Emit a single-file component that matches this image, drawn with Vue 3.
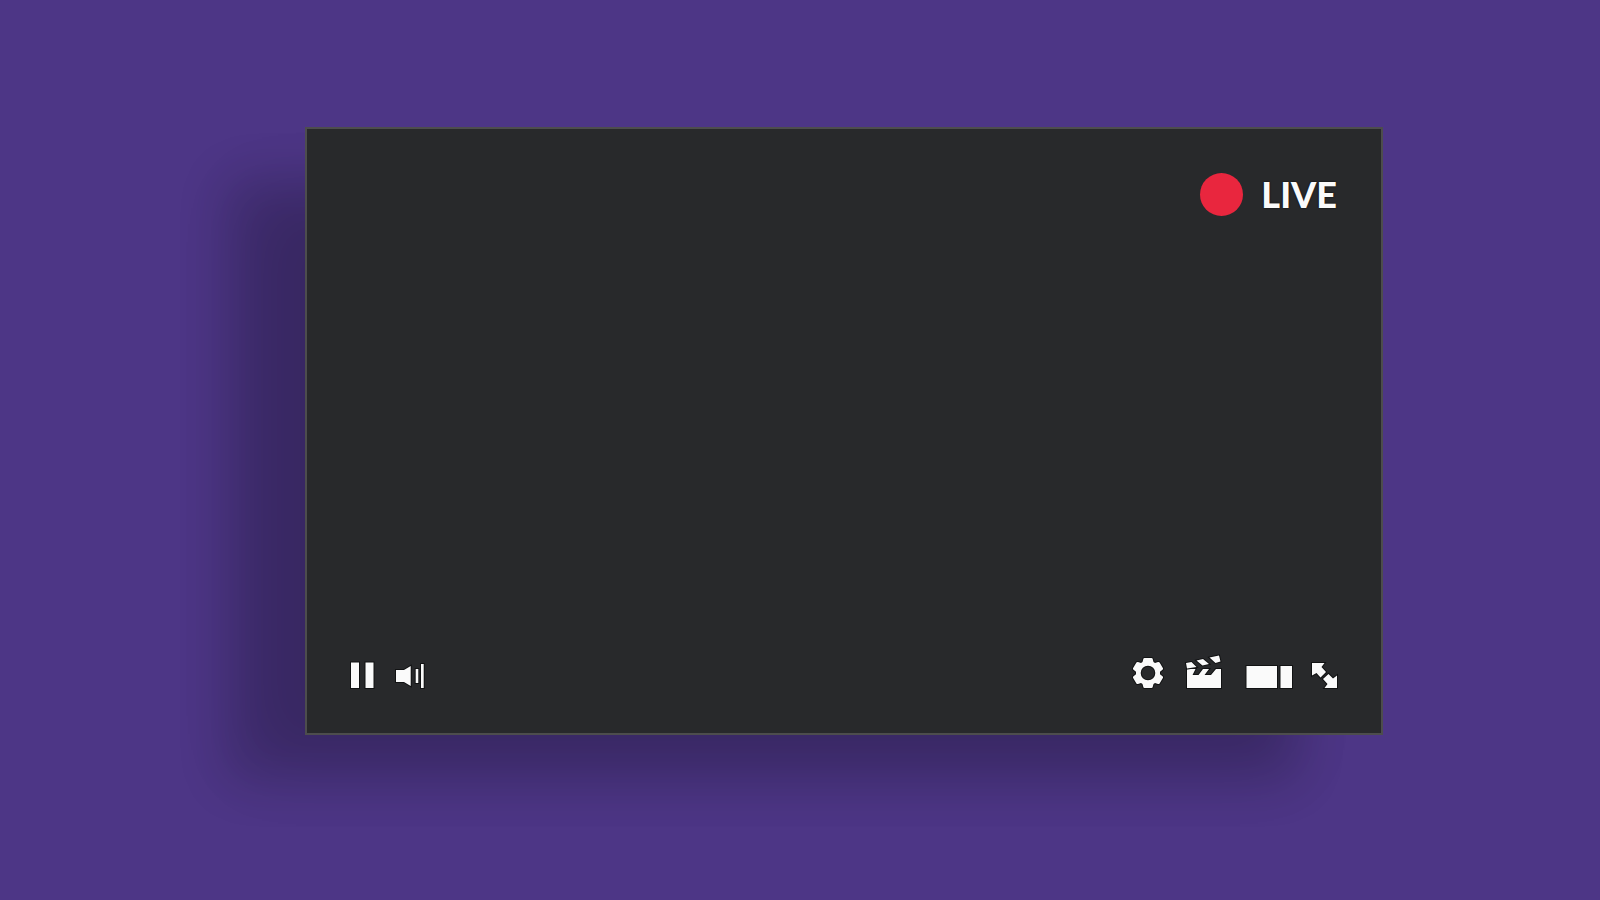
<template>
  <main class="stage">
    <section class="player" aria-label="Video player">
      <div class="live">
        <span class="dot"></span>
        <span class="live-text">LIVE</span>
      </div>

      <div class="controls">
        <div class="group left">
          <button type="button" :aria-label="playing ? 'Pause' : 'Play'" @click="playing = !playing">
            <svg v-if="playing" width="23" height="26" viewBox="0 0 23 26">
              <path d="M0 0.500h8v25.500H0zM14.500 0.500h8v25.500h-8z" />
            </svg>
            <svg v-else width="23" height="26" viewBox="0 0 23 26">
              <path d="M0 0L23 13L0 26z" />
            </svg>
          </button>
          <button type="button" aria-label="Volume">
            <svg width="28" height="26" viewBox="0 0 28 26">
              <path d="M0 8h8l6.700-4v20L8 20H0z" />
              <path d="M19.700 7h2.600v14h-2.600zM25 2h2.700v24h-2.700z" />
            </svg>
          </button>
        </div>

        <div class="group right">
          <button type="button" aria-label="Settings">
            <svg width="30" height="30" viewBox="0 0.5 30 30">
              <path
                fill-rule="evenodd"
                d="M11.500 0.500H18.500Q19.500 0.500 19.700 1.500L20.500 4.500L22 5.400L25 4.500Q26 4.200 26.600 5L30 10.800Q30.300 11.500 29.500 12.200L27 14.200V16.800L29.500 18.800Q30.300 19.500 30 20.200L26.600 26Q26 26.800 25 26.500L22 25.600L20.500 26.500L19.700 29.500Q19.500 30.500 18.500 30.500H11.500Q10.500 30.500 10.300 29.500L9.500 26.500L8 25.600L5 26.500Q4 26.800 3.400 26L0 20.200Q-0.300 19.500 0.500 18.800L3 16.800V14.200L0.500 12.200Q-0.300 11.500 0 10.800L3.400 5Q4 4.200 5 4.500L8 5.400L9.500 4.500L10.300 1.500Q10.500 0.500 11.500 0.500zM15 8.200a7.300 7.300 0 1 0 0 14.600a7.300 7.300 0 1 0 0-14.600z"
              />
            </svg>
          </button>
          <button type="button" class="clips" aria-label="Clips">
            <svg width="35" height="33" viewBox="0 0 35 33">
              <path d="M1 14H9.500L6.500 20H12.500L17 14H23L18.500 20H25L30 14H35V33H1z" />
              <path d="M0 8L5.500 7L10.500 12L1 13.500zM10.500 5.500L17 4L23 9L16.500 10.500zM23.500 2.500L33 0.500L34.500 6.500L29.500 8z" />
            </svg>
          </button>
          <button type="button" class="theater" aria-label="Theater mode">
            <svg width="46" height="22" viewBox="0 0 46 22">
              <path d="M0.500 0h30.500v22H0.500zM34.500 0h11.500v22H34.500z" />
            </svg>
          </button>
          <button type="button" aria-label="Fullscreen">
            <svg width="25" height="25" viewBox="0 0 25 25">
              <path d="M0 0H12.500L9.500 4L14 9L8.500 14.500L4.500 10L0 12.500z" />
              <path d="M25 25H12.500L15.500 21L11 16L16.500 11L21 15.500L25 12.500z" />
            </svg>
          </button>
        </div>
      </div>
    </section>
  </main>
</template>

<script setup>
import { ref } from "vue";

const playing = ref(true);
</script>

<style>
body {
  margin: 0;
  background: #4d3686;
}
</style>

<style scoped>
.stage {
  box-sizing: border-box;
  display: flex;
  min-height: 100vh;
  padding: 127px 217px 165px 305px;
}

.player {
  box-sizing: border-box;
  display: flex;
  flex: 1;
  flex-direction: column;
  justify-content: space-between;
  padding: 44px 44px 45px;
  border: 2px solid #4d4d4d;
  background: #28292b;
  box-shadow:
    -82px 49px 46px -2px rgba(0, 0, 0, 0.14),
    -76px 48px 64px -20px rgba(0, 0, 0, 0.14);
}

.live {
  display: flex;
  align-items: center;
  justify-content: flex-end;
  gap: 18px;
}

.dot {
  width: 43px;
  height: 43px;
  border-radius: 50%;
  background: #e9263e;
}

.live-text {
  color: #fafafa;
  font-family: Lato, "Liberation Sans", sans-serif;
  font-size: 36px;
  font-weight: 900;
  line-height: 43px;
  text-shadow: 0 0 2px #000;
}

.controls,
.group {
  display: flex;
  align-items: flex-end;
}

.controls {
  justify-content: space-between;
}

.left {
  gap: 22px;
}

.right {
  gap: 20px;
}

.group button {
  display: flex;
  padding: 0;
  border: 0;
  background: none;
  cursor: pointer;
}

.group .clips {
  margin-left: 3px;
}

.group .theater {
  margin-left: 5px;
}

.group svg {
  display: block;
  overflow: visible;
  fill: #fafafa;
  stroke: #111213;
  stroke-width: 2px;
  paint-order: stroke;
}
</style>
